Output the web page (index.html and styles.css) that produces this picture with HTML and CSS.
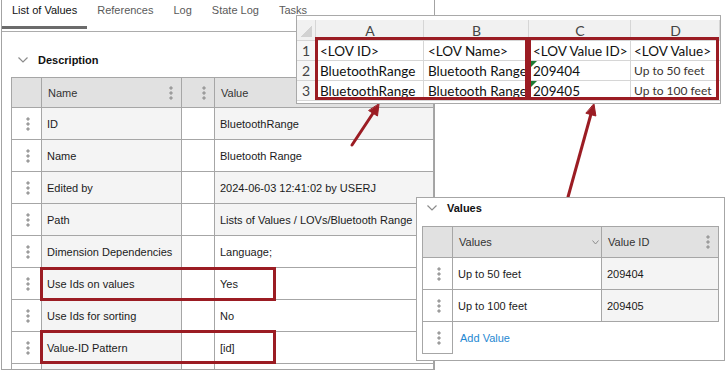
FILE: index.html
```html
<!DOCTYPE html>
<html>
<head>
<meta charset="utf-8">
<link rel="stylesheet" href="styles.css">
</head>
<body>
<div class="main">
  <div class="tabs">
    <div class="tab active">List of Values</div>
    <div class="tab">References</div>
    <div class="tab">Log</div>
    <div class="tab">State Log</div>
    <div class="tab">Tasks</div>
  </div>
  <div class="sec-title">
    <svg class="chev" width="10" height="6" viewBox="0 0 10 6"><polyline points="0.5,0.5 5,5 9.5,0.5" fill="none" stroke="#8c8c8c" stroke-width="1.2"/></svg>
    <span>Description</span>
  </div>
  <div class="grid desc">
    <div class="c hd"></div>
    <div class="c hd sb">Name<span class="kebab"></span></div>
    <div class="c hd end"><span class="kebab"></span></div>
    <div class="c hd">Value</div>

    <div class="c dots"><span class="kebab"></span></div><div class="c ro">ID</div><div class="c"></div><div class="c ro">BluetoothRange</div>
    <div class="c dots"><span class="kebab"></span></div><div class="c ro">Name</div><div class="c"></div><div class="c">Bluetooth Range</div>
    <div class="c dots"><span class="kebab"></span></div><div class="c ro">Edited by</div><div class="c"></div><div class="c ro">2024-06-03 12:41:02 by USERJ</div>
    <div class="c dots"><span class="kebab"></span></div><div class="c ro">Path</div><div class="c"></div><div class="c ro">Lists of Values / LOVs/Bluetooth Range</div>
    <div class="c dots"><span class="kebab"></span></div><div class="c ro">Dimension Dependencies</div><div class="c"></div><div class="c">Language;</div>
    <div class="c dots"><span class="kebab"></span></div><div class="c ro">Use Ids on values</div><div class="c"></div><div class="c">Yes</div>
    <div class="c dots"><span class="kebab"></span></div><div class="c ro">Use Ids for sorting</div><div class="c"></div><div class="c">No</div>
    <div class="c dots"><span class="kebab"></span></div><div class="c ro">Value-ID Pattern</div><div class="c"></div><div class="c">[id]</div>
    <div class="c dots"></div><div class="c ro"></div><div class="c"></div><div class="c"></div>
  </div>
</div>

<div class="hl hl-a"></div>
<div class="hl hl-b"></div>

<svg class="arrows" width="725" height="371" viewBox="0 0 725 371">
  <g stroke="#9b1c23" stroke-width="3" stroke-linecap="round" fill="#9b1c23">
    <line x1="352" y1="145" x2="373.5" y2="112.5"/>
    <polygon points="379,104 377.5,116 368.9,110.7" stroke-width="1" stroke-linejoin="round"/>
    <line x1="568" y1="197" x2="591" y2="114"/>
    <polygon points="594,104 595.9,116 586.2,113.3" stroke-width="1" stroke-linejoin="round"/>
  </g>
</svg>

<div class="xl">
  <div class="xgrid">
    <div class="xc xh corner"></div>
    <div class="xc xh">A</div>
    <div class="xc xh">B</div>
    <div class="xc xh">C</div>
    <div class="xc xh">D</div>

    <div class="xc rn">1</div>
    <div class="xc">&lt;LOV ID&gt;</div>
    <div class="xc">&lt;LOV Name&gt;</div>
    <div class="xc">&lt;LOV Value ID&gt;</div>
    <div class="xc dcol">&lt;LOV Value&gt;</div>

    <div class="xc rn">2</div>
    <div class="xc">BluetoothRange</div>
    <div class="xc">Bluetooth Range</div>
    <div class="xc flag">209404</div>
    <div class="xc dcol sm">Up to 50 feet</div>

    <div class="xc rn">3</div>
    <div class="xc">BluetoothRange</div>
    <div class="xc">Bluetooth Range</div>
    <div class="xc flag">209405</div>
    <div class="xc dcol sm">Up to 100 feet</div>
  </div>
</div>

<div class="hl hl-c"></div>
<div class="hl hl-d"></div>

<div class="vpanel">
  <div class="sec-title vt">
    <svg class="chev" width="10" height="6" viewBox="0 0 10 6"><polyline points="0.5,0.5 5,5 9.5,0.5" fill="none" stroke="#8c8c8c" stroke-width="1.2"/></svg>
    <span>Values</span>
  </div>
  <div class="grid vals">
    <div class="c hd"></div>
    <div class="c hd sb vh">Values<svg width="7" height="5" viewBox="0 0 7 5"><polyline points="0.5,0.5 3.5,4 6.5,0.5" fill="none" stroke="#8c8c8c" stroke-width="1"/></svg></div>
    <div class="c hd sb">Value ID<span class="kebab"></span></div>

    <div class="c dots"><span class="kebab"></span></div><div class="c">Up to 50 feet</div><div class="c ro">209404</div>
    <div class="c dots"><span class="kebab"></span></div><div class="c">Up to 100 feet</div><div class="c ro">209405</div>
    <div class="c dots"><span class="kebab"></span></div><div class="add">Add Value</div>
  </div>
</div>
</body>
</html>
```
FILE: styles.css
```css
html, body {
  margin: 0;
  padding: 0;
}
body {
  width: 725px;
  height: 371px;
  position: relative;
  overflow: hidden;
  background: #ffffff;
  font-family: "Liberation Sans", Arial, sans-serif;
  font-size: 11px;
  color: #1b1b1b;
}

/* ---------- main panel ---------- */
.main {
  margin-left: 1px;
  width: 434px;
  height: 370px;
  box-sizing: border-box;
  border: 1px solid #a3a3a3;
  border-top: none;
  overflow: hidden;
}
.tabs {
  display: flex;
  align-items: flex-start;
  height: 32px;
  box-sizing: border-box;
  border-bottom: 1px solid #acacac;
}
.tab {
  height: 29px;
  box-sizing: border-box;
  padding: 3px 10px 0;
  line-height: 14px;
  color: #5a5a5a;
  border-bottom: 3px solid transparent;
  white-space: nowrap;
}
.tab.active {
  color: #111111;
  border-bottom-color: #6b6b6b;
}

.sec-title {
  display: flex;
  align-items: center;
  height: 16px;
  margin: 20px 0 9px 16px;
  font-weight: bold;
  color: #111111;
}
.sec-title .chev {
  margin-right: 10px;
}

/* ---------- grids ---------- */
.grid {
  display: grid;
  border-left: 1px solid #a6a6a6;
  border-top: 1px solid #a6a6a6;
  width: max-content;
}
.desc {
  margin-left: 9px;
  grid-template-columns: 30px 140px 33px 219px;
  grid-auto-rows: 32px;
  grid-template-rows: 30px;
}
.c {
  display: flex;
  align-items: center;
  box-sizing: border-box;
  padding: 0 5px;
  border-right: 1px solid #a6a6a6;
  border-bottom: 1px solid #a6a6a6;
  background: #ffffff;
  white-space: nowrap;
  overflow: hidden;
}
.c.hd {
  background: #e1e1e1;
  color: #333333;
  padding-left: 6px;
}
.c.sb {
  justify-content: space-between;
  padding-right: 8px;
}
.c.end {
  justify-content: flex-end;
  padding-right: 8px;
}
.c.ro {
  background: #f4f4f4;
}
.c.dots {
  padding-left: 14px;
}
.kebab {
  display: inline-block;
  width: 4px;
  height: 14px;
  flex: none;
  background: radial-gradient(circle at 2px 2px, #9c9c9c 1.4px, transparent 1.8px) 0 0 / 4px 5px repeat-y;
}

/* ---------- red highlight boxes ---------- */
.hl {
  position: absolute;
  box-sizing: border-box;
  border: 3px solid #9b1c23;
}
.hl-a { left: 40px; top: 267px; width: 236px; height: 34px; }
.hl-b { left: 40px; top: 330px; width: 236px; height: 34px; }
.hl-c { left: 315px; top: 37px; width: 213px; height: 63px; }
.hl-d { left: 528px; top: 37px; width: 191px; height: 63px; }

.arrows {
  position: absolute;
  left: 0;
  top: 0;
}

/* ---------- spreadsheet ---------- */
.xl {
  position: absolute;
  left: 296px;
  top: 15px;
  width: 425px;
  height: 89px;
  box-sizing: border-box;
  border: 1px solid #a9a9a9;
  background: #ffffff;
  padding-top: 4px;
  font-family: Lato, "Open Sans", sans-serif;
  font-size: 13.5px;
  color: #111111;
}
.xgrid {
  display: grid;
  grid-template-columns: 19px 108px 105px 102px 89px;
  grid-template-rows: 21px 20px 20px 20px;
}
.xc {
  position: relative;
  display: flex;
  align-items: center;
  box-sizing: border-box;
  padding: 0 3px 0 4px;
  border-right: 1px solid #d6d6d6;
  border-bottom: 1px solid #d6d6d6;
  white-space: nowrap;
  overflow: hidden;
}
.xc.xh {
  justify-content: center;
  background: #f1f1f1;
  color: #444444;
  font-size: 14px;
}
.xc.corner::after {
  content: "";
  position: absolute;
  right: 3px;
  bottom: 3px;
  width: 11px;
  height: 12px;
  background: linear-gradient(to bottom right, transparent 50%, #d2d2d2 50%);
}
.xc.rn {
  justify-content: center;
  padding: 0;
  background: #f6f6f6;
  color: #444444;
  font-size: 14px;
}
.xc.dcol {
  padding-left: 3px;
  border-right: none;
}
.xc.sm {
  font-size: 12px;
  color: #3a3330;
}
.xc.flag::before {
  content: "";
  position: absolute;
  left: 2px;
  top: 0;
  border-top: 6px solid #1e7b34;
  border-right: 6px solid transparent;
}

/* ---------- values panel ---------- */
.vpanel {
  position: absolute;
  left: 416px;
  top: 197px;
  width: 309px;
  height: 164px;
  box-sizing: border-box;
  border: 1px solid #a6a6a6;
  background: #ffffff;
}
.sec-title.vt {
  margin: 2px 0 10px 10px;
}
.vals {
  margin-left: 5px;
  grid-template-columns: 30px 149px 117px;
  grid-template-rows: 31px 32px 32px 32px;
}
.c.vh {
  padding-right: 2px;
}
.add {
  grid-column: span 2;
  display: flex;
  align-items: center;
  padding-left: 7px;
  color: #1f88d2;
}
```
